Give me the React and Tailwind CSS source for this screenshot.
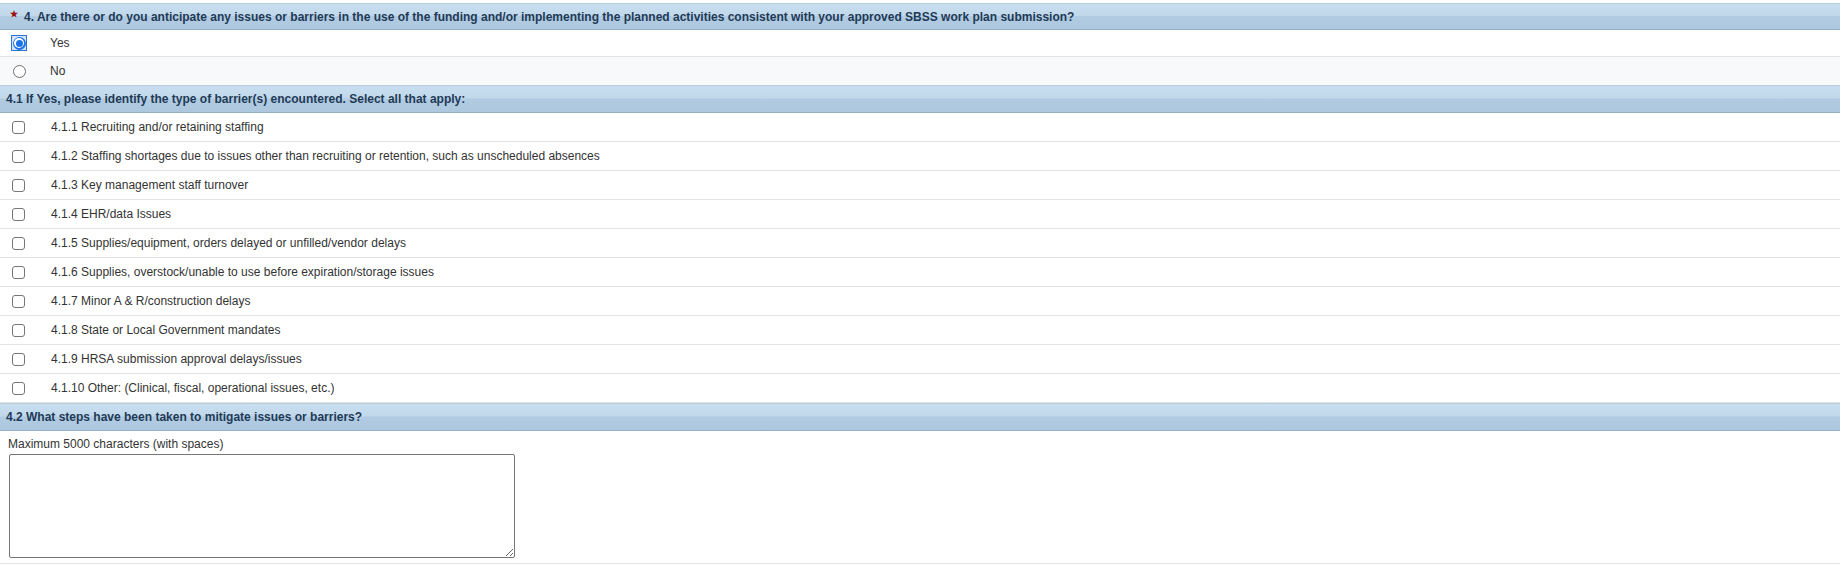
import { useState } from "react";

/* ================= DATA ================= */
const barriers = [
  "4.1.1 Recruiting and/or retaining staffing",
  "4.1.2 Staffing shortages due to issues other than recruiting or retention, such as unscheduled absences",
  "4.1.3 Key management staff turnover",
  "4.1.4 EHR/data Issues",
  "4.1.5 Supplies/equipment, orders delayed or unfilled/vendor delays",
  "4.1.6 Supplies, overstock/unable to use before expiration/storage issues",
  "4.1.7 Minor A & R/construction delays",
  "4.1.8 State or Local Government mandates",
  "4.1.9 HRSA submission approval delays/issues",
  "4.1.10 Other: (Clinical, fiscal, operational issues, etc.)"
];

const headerCls =
  "flex items-center border-t border-[#b9cedd] border-b border-b-[#93adc3] bg-[linear-gradient(to_bottom,#c8def0_0%,#c1d8eb_46%,#b1cce2_50%,#adc8de_100%)] text-[12px] font-bold text-[#1f3a56]";

/* ================= PIECES ================= */
function Radio({ checked, onClick }) {
  if (checked) {
    return (
      <span onClick={onClick} className="w-[16px] h-[16px] flex items-center justify-center border border-[#2f74d0] bg-[#d3e5fa] cursor-pointer">
        <span className="w-[13px] h-[13px] rounded-full bg-[#1a73e8] flex items-center justify-center">
          <span className="w-[10px] h-[10px] rounded-full bg-white flex items-center justify-center">
            <span className="w-[7px] h-[7px] rounded-full bg-[#1a73e8]" />
          </span>
        </span>
      </span>
    );
  }
  return (
    <span onClick={onClick} className="w-[16px] h-[16px] flex items-center justify-center cursor-pointer">
      <span className="w-[13px] h-[13px] rounded-full border border-[#6f6f6f] bg-white" />
    </span>
  );
}

function Checkbox({ checked, onClick }) {
  return (
    <span onClick={onClick}
      className={checked
        ? "w-[13px] h-[13px] rounded-[3px] border border-[#1a73e8] bg-[#1a73e8] cursor-pointer"
        : "w-[13px] h-[13px] rounded-[3px] border border-[#767676] bg-white cursor-pointer"} />
  );
}

/* ================= COMPONENT ================= */
export default function App() {
  const [answer, setAnswer] = useState("yes");
  const [picked, setPicked] = useState({});
  const [notes, setNotes] = useState("");

  const toggle = (i) => setPicked({ ...picked, [i]: !picked[i] });

  return (
    <div className="w-[1840px] pt-[3px] bg-white text-[12px] text-[#333] font-['Liberation_Sans',Arial,sans-serif]">
      {/* QUESTION 4 */}
      <div className={headerCls + " h-[27px] pl-[10px]"}>
        <span className="text-[#9b0d0d] text-[9px] mr-[6px] -mt-[4px]">★</span>
        <span>4. Are there or do you anticipate any issues or barriers in the use of the funding and/or implementing the planned activities consistent with your approved SBSS work plan submission?</span>
      </div>
      <div className="flex items-center h-[27px] border-b border-[#e4e4e4] bg-white">
        <div className="w-[50px] pl-[11px] flex items-center">
          <Radio checked={answer === "yes"} onClick={() => setAnswer("yes")} />
        </div>
        <span>Yes</span>
      </div>
      <div className="flex items-center h-[28px] bg-[#f7f9fa]">
        <div className="w-[50px] pl-[11px] flex items-center">
          <Radio checked={answer === "no"} onClick={() => setAnswer("no")} />
        </div>
        <span>No</span>
      </div>

      {/* 4.1 */}
      <div className={headerCls + " h-[28px] pl-[6px]"}>
        4.1 If Yes, please identify the type of barrier(s) encountered. Select all that apply:
      </div>
      {barriers.map((b, i) => (
        <div key={i} className="flex items-center h-[29px] border-b border-[#e2e2e2]">
          <div className="w-[51px] pl-[12px] flex items-center">
            <Checkbox checked={!!picked[i]} onClick={() => toggle(i)} />
          </div>
          <span>{b}</span>
        </div>
      ))}

      {/* 4.2 */}
      <div className={headerCls + " h-[28px] pl-[6px]"}>
        4.2 What steps have been taken to mitigate issues or barriers?
      </div>
      <div className="pl-[9px] pt-[6px] pb-[5px] border-b border-[#e4e4e4]">
        <div className="leading-[14px] mb-[3px] -ml-[1px]">Maximum 5000 characters (with spaces)</div>
        <textarea value={notes} onChange={(e) => setNotes(e.target.value)}
          className="block w-[506px] h-[104px] border border-[#767676] rounded-[2px] bg-white text-[12px] p-1 outline-none" />
      </div>
    </div>
  );
}
